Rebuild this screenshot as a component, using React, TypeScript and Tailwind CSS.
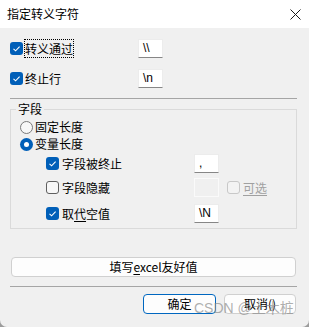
import React from "react";

function Check({ checked, disabled }: { checked?: boolean; disabled?: boolean }) {
  if (checked) {
    return (
      <span className="w-[13px] h-[13px] shrink-0 rounded-[3px] bg-[#005fb8] flex items-center justify-center">
        <svg width="13" height="13" viewBox="0 0 13 13">
          <polyline points="3.5,6.8 5.6,8.8 9.6,4.6" fill="none" stroke="#ffffff" strokeWidth="1.1" />
        </svg>
      </span>
    );
  }
  return (
    <span
      className={
        disabled
          ? "block w-[13px] h-[13px] shrink-0 rounded-[3px] border border-[#c8c8c8] bg-[#f3f3f3]"
          : "block w-[13px] h-[13px] shrink-0 rounded-[3px] border border-[#5f5f5f] bg-[#f7f7f7]"
      }
    />
  );
}

function Radio({ checked }: { checked?: boolean }) {
  if (checked) {
    return (
      <span className="w-[13px] h-[13px] shrink-0 rounded-full bg-[#005fb8] flex items-center justify-center">
        <span className="w-[5px] h-[5px] rounded-full bg-white" />
      </span>
    );
  }
  return <span className="block w-[13px] h-[13px] shrink-0 rounded-full border border-[#7a7a7a] bg-[#f7f7f7]" />;
}

function Box({ value, disabled }: { value?: string; disabled?: boolean }) {
  return (
    <span
      className={
        disabled
          ? "block w-[25px] h-[19px] shrink-0 border border-[#fafafa] bg-[#f0f0f0]"
          : "block w-[25px] h-[19px] shrink-0 bg-white border border-[#ececec] border-b-[#868686] pl-[4px] text-[12px] leading-[17px] font-['Liberation_Sans',sans-serif]"
      }
    >
      {value}
    </span>
  );
}

export default function App() {
  return (
    <div className="w-[309px] h-[327px] bg-[#9c9c9c]">
      <div className="w-[309px] h-[327px] bg-[#f0f0f0] rounded-bl-[7px] rounded-br-[7px] relative overflow-hidden text-[12px] text-black font-['Noto_Sans_CJK_SC','Liberation_Sans',sans-serif] leading-[16px]">
        <div className="h-[28px] bg-white flex items-center justify-between pl-[7px] pr-[8px]">
          <span>指定转义字符</span>
          <svg width="11" height="11" viewBox="0 0 11 11">
            <path d="M0.5 0.5 L10.5 10.5 M10.5 0.5 L0.5 10.5" stroke="#1a1a1a" strokeWidth="1" fill="none" />
          </svg>
        </div>
        <div className="px-[10px]">
          <div className="mt-[11px] h-[19px] flex items-center">
            <Check checked />
            <span className="ml-[1px] w-[114px]">
              <span className="border border-dotted border-black">转义通过</span>
            </span>
            <Box value="\\" />
          </div>
          <div className="mt-[11px] h-[19px] flex items-center">
            <Check checked />
            <span className="ml-[2px] w-[113px]">终止行</span>
            <Box value="\n" />
          </div>
          <div className="mt-[10px] h-px w-[287px] bg-[#a5a5a5]" />
          <div className="mt-[10px] w-[287px] border border-[#dadada] relative pl-[9px] pt-[10px] pb-[5px]">
            <span className="absolute -top-[9px] left-[5px] px-[2px] bg-[#f0f0f0]">字段</span>
            <div className="h-[14px] flex items-center">
              <Radio />
              <span className="ml-[2px]">固定长度</span>
            </div>
            <div className="mt-[3px] h-[14px] flex items-center">
              <Radio checked />
              <span className="ml-[2px]">变量长度</span>
            </div>
            <div className="mt-[3px] h-[19px] flex items-center pl-[26px]">
              <Check checked />
              <span className="ml-[3px] w-[132px]">字段被终止</span>
              <Box value="," />
            </div>
            <div className="mt-[5px] h-[19px] flex items-center pl-[26px]">
              <Check />
              <span className="ml-[3px] w-[132px]">字段隐藏</span>
              <Box disabled />
              <span className="ml-[8px] flex">
                <Check disabled />
              </span>
              <span className="ml-[3px] text-[#a0a0a0] underline underline-offset-2">可选</span>
            </div>
            <div className="mt-[7px] h-[19px] flex items-center pl-[26px]">
              <Check checked />
              <span className="ml-[3px] w-[132px]">
                取<span className="underline underline-offset-2">代</span>空值
              </span>
              <Box value="\N" />
            </div>
          </div>
          <button className="mt-[28px] ml-[1px] w-[285px] h-[20px] rounded-[4px] border border-[#d0d0d0] bg-[#fdfdfd] flex items-center justify-center">
            <span>
              填写<span className="underline underline-offset-2">e</span>xcel友好值
            </span>
          </button>
          <div className="mt-[9px] h-px w-[287px] bg-[#a5a5a5]" />
          <div className="mt-[7px] w-[287px] flex justify-end gap-[8px] pr-[1px]">
            <button className="w-[73px] h-[20px] rounded-[4px] border border-[#0067c0] bg-[#fdfdfd] flex items-center justify-center">
              确定
            </button>
            <button className="w-[72px] h-[20px] rounded-[4px] border border-[#d0d0d0] bg-[#fdfdfd] flex items-center justify-center">
              取消()
            </button>
          </div>
        </div>
        <span className="absolute left-[194px] top-[299px] text-[14px] leading-[18px] text-[#8c8c8c]/70 font-['Liberation_Sans','Noto_Sans_CJK_SC',sans-serif]">
          CSDN @土木桩
        </span>
      </div>
    </div>
  );
}
